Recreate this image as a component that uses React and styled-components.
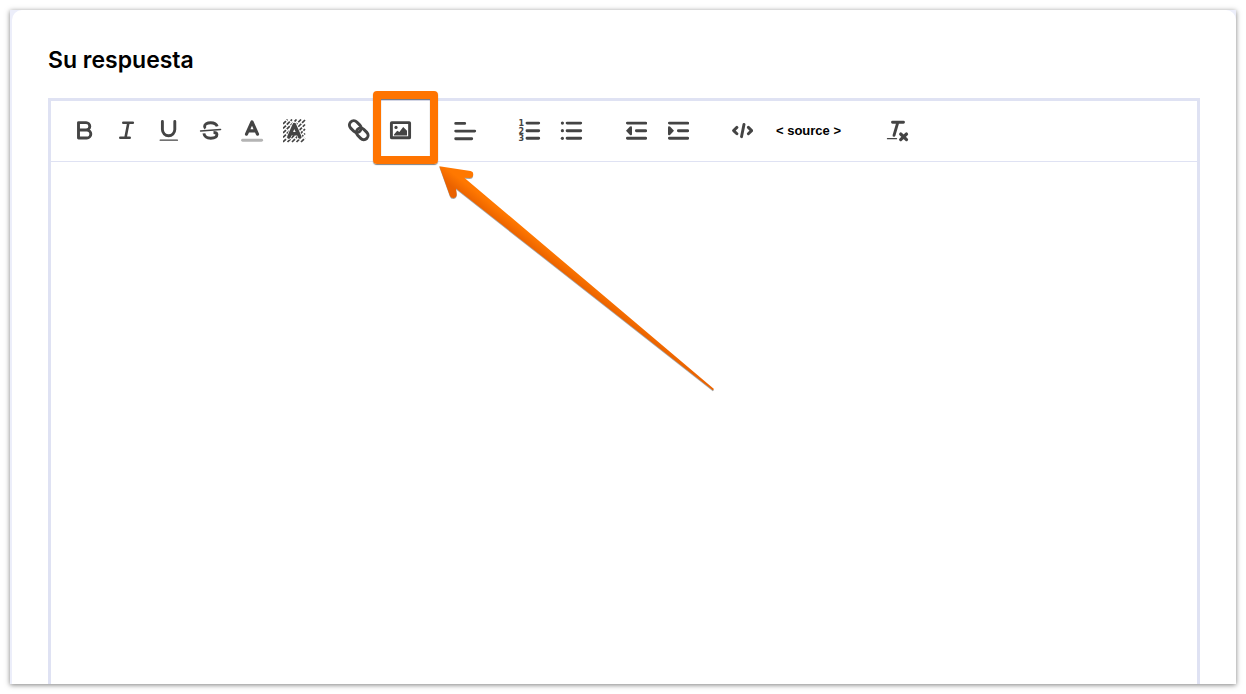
import React, { useState } from 'react';
import styled, { createGlobalStyle } from 'styled-components';

const GlobalStyle = createGlobalStyle`
    * {
        box-sizing: border-box;
    }
    body {
        margin: 0;
        background: #fff;
        font-family: Inter, "Liberation Sans", sans-serif;
    }
`;

const Page = styled.main`
    display: flex;
    min-height: 100vh;
    padding: 10px;
`;

const Card = styled.div`
    display: flex;
    flex: 1;
    min-width: 0;
    padding-left: 2px;
    background: #eceefa;
    box-shadow: 0 1px 5px rgba(0, 0, 0, 0.5);
`;

const CardBody = styled.section`
    display: flex;
    flex: 1;
    flex-direction: column;
    min-width: 0;
    padding: 36px 36px 0;
    border-radius: 10px 10px 0 0;
    background: #fff;
`;

const Title = styled.label`
    margin-bottom: 24px;
    color: #000;
    font-size: 23px;
    font-weight: 600;
    line-height: 28px;
`;

const Editor = styled.div`
    display: flex;
    flex: 1;
    flex-direction: column;
    border: 3px solid #dfe2f3;
    border-bottom: 0;
`;

const Toolbar = styled.div`
    display: flex;
    flex-wrap: wrap;
    align-items: center;
    gap: 0 22px;
    min-height: 61px;
    padding: 0 13px;
    border-bottom: 1px solid #dfe2f3;
`;

const ToolGroup = styled.div`
    display: flex;
    align-items: center;
`;

const ToolButton = styled.button`
    position: relative;
    display: flex;
    align-items: center;
    justify-content: center;
    width: ${(props) => (props.$text ? 'auto' : '42px')};
    height: 42px;
    padding: ${(props) => (props.$text ? '0 14px 2px' : '0')};
    border: 0;
    background: transparent;
    color: ${(props) => (props.$text ? '#000' : '#444')};
    font-family: "Liberation Sans", Arial, sans-serif;
    font-size: 13px;
    font-weight: bold;
    cursor: pointer;
`;

const IconSvg = styled.svg`
    display: block;
    flex: none;
    width: 24px;
    height: 24px;
    fill: none;
    stroke: currentColor;
    stroke-width: 2.9;
    stroke-linecap: round;
    stroke-linejoin: round;

    .solid {
        fill: currentColor;
        stroke: none;
    }
    text {
        fill: currentColor;
        stroke: none;
        font: bold 8px "DejaVu Sans", sans-serif;
    }
`;

const TextArea = styled.textarea`
    flex: 1;
    width: 100%;
    min-height: 320px;
    padding: 20px;
    border: 0;
    outline: 0;
    background: transparent;
    font-family: inherit;
    font-size: 16px;
    resize: none;
`;

// highlight over the image button, with the arrow that points at it
const Callout = styled.span`
    position: absolute;
    z-index: 1;
    top: -19px;
    left: -7px;
    width: 65px;
    height: 73px;
    pointer-events: none;
`;

const CalloutFrame = styled.span`
    display: block;
    height: 100%;
    border: 8px solid #ff7400;
    border-radius: 4px;
    box-shadow: 0 1px 1px rgba(0, 0, 0, 0.5), inset 0 1px 1px rgba(0, 0, 0, 0.5);
`;

const Arrow = styled.svg`
    position: absolute;
    top: 100%;
    left: 100%;
    width: 280px;
    height: 230px;
    overflow: visible;
    filter: drop-shadow(0 1px 0 rgba(0, 0, 0, 0.35));
`;

const icons = {
    bold: <path d="M5.5 3.6h7.6a3.7 3.7 0 0 1 0 7.4H5.5zM5.5 11h8.3a4 4 0 0 1 0 8H5.5z" />,
    italic: <path strokeWidth="2.6" d="M8.3 3.8h9.5M5.3 18.8h9.4M13.4 3.8l-2.9 15" />,
    underline: (
        <>
            <path d="M5.4 2.4v8.2a6.2 6.2 0 0 0 12.4 0V2.4" />
            <path strokeWidth="1.3" d="M3.2 21.2h17.2" />
        </>
    ),
    strike: (
        <>
            <path
                strokeLinecap="butt"
                d="M18.2 7.4C17.4 4.8 14.5 3.7 11.7 3.7 8 3.7 5.6 5.2 5.6 7.3c0 .9.4 1.5 1 1.9M4.9 14.4c.5 3.3 3.6 4.8 6.9 4.8 3.6 0 6.1-1.5 6.1-3.7 0-1.3-1-2-3.4-2"
            />
            <path strokeWidth="1.5" d="M1.6 12l20-1.6" />
        </>
    ),
    color: (
        <>
            <path strokeWidth="3.2" d="M5.5 15.2L11 2.9l5.5 12.3M7.4 11.9h7.2" />
            <path stroke="#b4b4b4" d="M1.6 21.2h19" />
        </>
    ),
    background: (
        <>
            <path
                strokeWidth="1.7"
                strokeLinecap="butt"
                strokeDasharray="4.2 1.2"
                d="M0 5l4.500-4.500M0 9.500l9-9M0 14L13.500.5M0 18.500l18-18M0 23L22 1M4.500 23L22 5.500M9 23l13-13M13.500 23l8.500-8.500M18 23l4-4"
            />
            <path stroke="#fff" strokeWidth="5" d="M5.700 18.200l5.600-13 5.700 13" />
            <path strokeWidth="3.600" d="M5.900 18L11.300 5.600l5.500 12.400M7.700 14.800h7.200" />
        </>
    ),
    link: (
        <g strokeWidth="3">
            <rect x="1.8" y="3.3" width="13" height="8.6" rx="4.3" transform="rotate(45 8.300 7.600)" />
            <rect x="8.7" y="10.5" width="13" height="8.6" rx="4.3" transform="rotate(45 15.200 14.800)" />
        </g>
    ),
    image: (
        <>
            <rect x="2.4" y="3.6" width="18.2" height="15.2" rx=".4" />
            <circle className="solid" cx="7" cy="8.4" r="1.6" />
            <path className="solid" d="M5 16.4v-1l3.200-3.700 2.200 1.200L14.200 8l3.800 3.700v4.700z" />
        </>
    ),
    align: <path d="M2.7 4.4h9M2.7 12.1h19M2.7 19.8h16" />,
    ordered: (
        <>
            <text x="1.4" y="6.8">1</text>
            <text x="1.4" y="14.5">2</text>
            <text x="1.4" y="22.2">3</text>
            <path d="M10 4.1h11.700M10 11.700h11.700M10 19.300h11.700" />
        </>
    ),
    unordered: (
        <>
            <g className="solid">
                <circle cx="3.4" cy="4.1" r="1.6" />
                <circle cx="3.4" cy="11.7" r="1.6" />
                <circle cx="3.4" cy="19.3" r="1.6" />
            </g>
            <path d="M8.1 4.1h13.600M8.100 11.700h13.600M8.100 19.300h13.600" />
        </>
    ),
    outdent: (
        <>
            <path d="M4.4 4.1h18.300M13.400 11.700h9.300M4.400 19.300h18.300" />
            <path className="solid" d="M3 11.7l4-4.200q2-.8 2 1v6.400q0 1.800-2 1z" />
        </>
    ),
    indent: (
        <>
            <path d="M4.4 4.1h18.300M13.400 11.700h9.300M4.400 19.300h18.300" />
            <path className="solid" d="M9 11.7l-4-4.200q-2-.8-2 1v6.400q0 1.800 2 1z" />
        </>
    ),
    code: <path d="M7.9 8.4l-3.300 3.200 3.300 3.200M15 5.400l-2.500 12.300M19.400 8.400l3.200 3.200-3.200 3.200" />,
    clear: (
        <>
            <path d="M6.5 3.2h11M11.900 3.200L8 16.300" />
            <path strokeWidth="1.3" d="M1.5 19.7h9" />
            <path strokeWidth="3.2" d="M14.7 15l5.800 5.600M20.500 15l-5.800 5.600" />
        </>
    ),
};

const toolGroups = [
    [
        ['bold', 'Negrita'],
        ['italic', 'Cursiva'],
        ['underline', 'Subrayado'],
        ['strike', 'Tachado'],
        ['color', 'Color del texto'],
        ['background', 'Color de fondo'],
    ],
    [
        ['link', 'Enlace'],
        ['image', 'Imagen'],
    ],
    [['align', 'Alinear']],
    [
        ['ordered', 'Lista numerada'],
        ['unordered', 'Lista con viñetas'],
    ],
    [
        ['outdent', 'Reducir sangría'],
        ['indent', 'Aumentar sangría'],
    ],
    [
        ['code', 'Código'],
        ['source', 'Código fuente'],
    ],
    [['clear', 'Quitar formato']],
];

function ImageCallout() {
    return (
        <Callout aria-hidden="true">
            <CalloutFrame />
            <Arrow viewBox="0 0 280 230">
                <defs>
                    <linearGradient id="arrowFill" gradientUnits="userSpaceOnUse" x1="3" y1="0" x2="-4" y2="9">
                        <stop offset="0" stopColor="#ff7800" />
                        <stop offset="1" stopColor="#ea6200" />
                    </linearGradient>
                </defs>
                <path
                    fill="url(#arrowFill)"
                    d="M1.3 2.3L32.5 7Q35.3 7.6 35.2 10.5 35 14 31.5 14L26.3 13.7 276 225 274.8 226.3 18 24.6 18.7 30Q18.8 33.5 15.8 34 12.8 34.3 11.8 31.5Z"
                />
            </Arrow>
        </Callout>
    );
}

export default function App() {
    const [answer, setAnswer] = useState('');

    return (
        <React.Fragment>
            <GlobalStyle />
            <Page>
                <Card>
                    <CardBody>
                        <Title htmlFor="answer">Su respuesta</Title>
                        <Editor>
                            <Toolbar role="toolbar">
                                {toolGroups.map((group) => (
                                    <ToolGroup key={group[0][0]}>
                                        {group.map(([name, label]) => (
                                            <ToolButton
                                                key={name}
                                                type="button"
                                                aria-label={label}
                                                $text={name === 'source'}
                                            >
                                                {name === 'source' ? (
                                                    '< source >'
                                                ) : (
                                                    <IconSvg viewBox="0 0 24 24">{icons[name]}</IconSvg>
                                                )}
                                                {name === 'image' && <ImageCallout />}
                                            </ToolButton>
                                        ))}
                                    </ToolGroup>
                                ))}
                            </Toolbar>
                            <TextArea
                                id="answer"
                                value={answer}
                                onChange={(e) => setAnswer(e.target.value)}
                            />
                        </Editor>
                    </CardBody>
                </Card>
            </Page>
        </React.Fragment>
    );
}
